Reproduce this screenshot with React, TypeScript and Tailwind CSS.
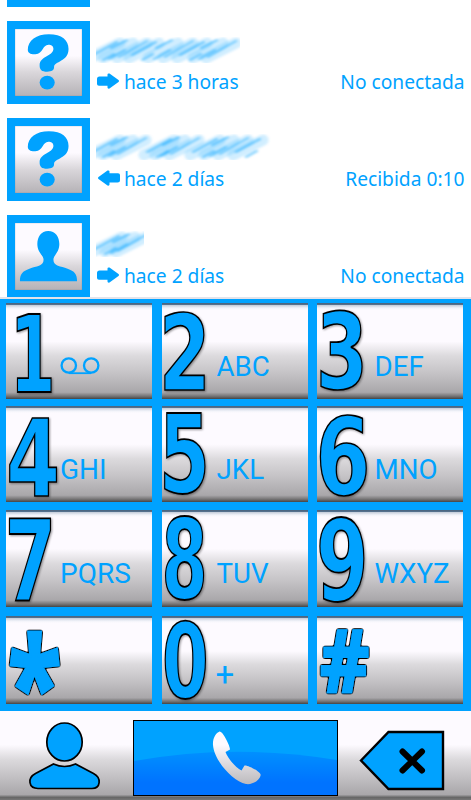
import { ReactNode } from 'react'

type Box = [number, number, number, number]

// left, right, ascent and descent of each glyph, in thousandths of an em
const ink: Record<string, Box> = {
  '1': [117, 633, 729, 0],
  '2': [73, 612, 742, 0],
  '3': [66, 628, 742, -14],
  '4': [36, 657, 729, 0],
  '5': [74, 640, 729, -14],
  '6': [50, 651, 742, -14],
  '7': [67, 630, 729, 0],
  '8': [46, 649, 742, -14],
  '9': [45, 646, 742, -14],
  '0': [46, 650, 742, -14],
  '*': [29, 515, 766, 287],
  '#': [22, 624, 714, 0],
}

type KeyProps = {
  digit: string
  label?: ReactNode
  labelClass?: string
  // where the digit stands inside the key: x0, y0, x1, y1
  box: Box
}

const first = 'mt-[48px] text-[28px]'
const second = 'mt-[48px] ml-px text-[27.7px]'
const third = 'mt-[48px] ml-[3.5px] text-[27.7px]'

const rows: { height: string; keys: KeyProps[] }[] = [
  {
    height: 'h-[96px] mb-[7px]',
    keys: [
      {
        digit: '1',
        box: [11.5, 10, 45.5, 88.5],
        label: <Voicemail />,
        labelClass: first,
      },
      { digit: '2', box: [2.5, 9, 42.5, 86.5], label: 'ABC', labelClass: second },
      { digit: '3', box: [4, 8, 46, 87], label: 'DEF', labelClass: third },
    ],
  },
  {
    height: 'h-[96px] mb-[8px]',
    keys: [
      { digit: '4', box: [3, 11, 51, 89.5], label: 'GHI', labelClass: first },
      { digit: '5', box: [2.5, 7.5, 44, 88], label: 'JKL', labelClass: second },
      { digit: '6', box: [2.5, 8.5, 50, 89], label: 'MNO', labelClass: third },
    ],
  },
  {
    height: 'h-[97px] mb-[9px]',
    keys: [
      { digit: '7', box: [3.5, 7.5, 45.5, 90], label: 'PQRS', labelClass: first },
      { digit: '8', box: [2.5, 6, 42.5, 89.5], label: 'TUV', labelClass: second },
      { digit: '9', box: [2.5, 7.5, 48, 92], label: 'WXYZ', labelClass: third },
    ],
  },
  {
    height: 'h-[88px]',
    keys: [
      { digit: '*', box: [4.5, 15, 52.5, 78] },
      {
        digit: '0',
        box: [3, 5.5, 43.5, 83],
        label: '+',
        labelClass: 'mt-[43px] text-[33px]',
      },
      { digit: '#', box: [5, 14.5, 50.5, 75.5] },
    ],
  },
]

function Voicemail() {
  return (
    <svg width="40" height="18" viewBox="0 0 40 18" className="mt-[6px]">
      <g fill="none" stroke="#00a2ff" strokeWidth="2.3">
        <circle cx="8.8" cy="8.5" r="7.2" />
        <circle cx="31.2" cy="8.5" r="7.2" />
        <path d="M8.8 16.2H31.2" strokeWidth="1.8" />
      </g>
    </svg>
  )
}

const Digit = ({ digit, box }: KeyProps) => {
  const [x0, y0, x1, y1] = box
  const [l, r, top, bottom] = ink[digit]
  const sx = (x1 - x0) / (r - l)
  const sy = (y1 - y0) / (top - bottom)
  const symbol = digit === '*' || digit === '#'

  return (
    <svg
      width="54"
      height="88"
      className={
        symbol
          ? 'shrink-0 overflow-visible [filter:url(#outline)]'
          : 'shrink-0 overflow-visible drop-shadow-[1.5px_1px_1px_rgba(0,0,0,0.4)]'
      }
    >
      {symbol && (
        <filter id="outline" x="-10%" y="-10%" width="120%" height="120%">
          <feGaussianBlur in="SourceAlpha" stdDeviation="0.9" />
          <feComponentTransfer result="edge">
            <feFuncA type="linear" slope="4" intercept="-0.3" />
          </feComponentTransfer>
          <feFlood floodColor="#000" />
          <feComposite in2="edge" operator="in" />
          <feMerge>
            <feMergeNode />
            <feMergeNode in="SourceGraphic" />
          </feMerge>
        </filter>
      )}
      <text
        transform={`matrix(${sx * 10} 0 0 ${sy * 10} ${x0 - l * sx} ${y0 + top * sy})`}
        fontSize="100"
        fontWeight="bold"
        fontFamily={
          symbol ? '"Open Sans", sans-serif' : '"DejaVu Sans", sans-serif'
        }
        fill="#00a2ff"
        stroke={symbol ? '#00a2ff' : '#000'}
        strokeWidth={symbol ? 2.4 : 1.5}
        vectorEffect="non-scaling-stroke"
      >
        {digit}
      </text>
    </svg>
  )
}

const Key = (props: KeyProps) => (
  <div className="flex h-full w-[146px] bg-[linear-gradient(to_bottom,#46617d_0,#55708c_1.5px,#c9d1de_2.5px,#f2f3fa_5px,#fdfaff_7px,#fdfaff_40%,#dcdadd_55%,#c5c3c6_73%,#a9a7aa_93%,#767576_97%,#454545_100%)]">
    <Digit {...props} />
    <div
      className={`h-8 font-['Roboto'] leading-8 text-[#00a2ff] ${props.labelClass}`}
    >
      {props.label}
    </div>
  </div>
)

const Unknown = () => (
  <svg viewBox="45 87 204 202" className="h-full w-full" fill="#00a2ff">
    <path d="M84 149C84 121 110 102 148 102C188 102 208 120 208 147C208 186 164 184 164 202C164 212 157 216 143 216C126 216 120 210 120 197C120 168 160 170 162 147C162 138 155 134 147 134C128 134 132 161 107 163C92 164 84 158 84 149Z" />
    <ellipse cx="143" cy="249" rx="23" ry="21" />
  </svg>
)

const Person = () => (
  <svg viewBox="45 55 204 202" className="h-full w-full" fill="#00a2ff">
    <path d="M146 78C168 78 180 96 180 118C180 144 162 152 162 166C162 186 184 185 205 193C226 201 234 208 234 231H60C60 208 68 201 89 193C110 185 132 186 132 166C132 152 113 144 113 118C113 96 125 78 146 78Z" />
  </svg>
)

type SmudgeProps = { id: string; width: number; dark: number[] }

const Smudge = ({ id, width, dark }: SmudgeProps) => (
  <svg width={width} height="26" className="mt-4 -ml-px overflow-hidden">
    <defs>
      <filter id={id} x="-10%" y="-30%" width="120%" height="160%">
        <feGaussianBlur stdDeviation="1.5 0.9" />
      </filter>
    </defs>
    <g filter={`url(#${id})`} stroke="#00a2ff" strokeLinecap="round">
      {dark.map((x, i) => (
        <g key={x}>
          <path d={`M${x - 10} 21L${x + 20} 6`} strokeWidth="11" opacity="0.18" />
          <path
            d={
              i % 3 === 1
                ? `M${x - 2} 11L${x + 14} 3M${x - 4} 22L${x + 12} 13`
                : i % 3 === 2
                  ? `M${x - 8} 20L${x + 6} 12M${x + 4} 13L${x + 20} 4`
                  : `M${x - 7} 18L${x + 17} 5M${x + 3} 23L${x + 14} 17`
            }
            strokeWidth="2"
            opacity="0.5"
          />
        </g>
      ))}
    </g>
  </svg>
)

const Arrow = ({ incoming }: { incoming?: boolean }) => (
  <svg
    width="22"
    height="16"
    viewBox="0 0 22 16"
    className={
      incoming
        ? '-mt-[3px] ml-px shrink-0 rotate-180'
        : '-mt-[3px] shrink-0'
    }
    fill="#00a2ff"
  >
    <path d="M2.500 3.500H10.500V1.500Q10.500 0 12.500 0.500L21.500 7Q22.500 8 21.500 9L12.500 15.500Q10.500 16 10.500 14.500V12.800H2Q0 12.800 0 11V6Q0 3.500 2.500 3.500Z" />
  </svg>
)

const calls = [
  {
    id: 'call-a',
    icon: <Unknown />,
    when: 'hace 3 horas',
    status: 'No conectada',
    width: 144,
    dark: [4, 17, 31, 43, 62, 77, 91, 107, 120],
  },
  {
    id: 'call-b',
    icon: <Unknown />,
    when: 'hace 2 días',
    status: 'Recibida 0:10',
    incoming: true,
    width: 175,
    dark: [4, 17, 30, 58, 69, 83, 104, 118, 132, 147],
  },
  {
    id: 'call-c',
    icon: <Person />,
    when: 'hace 2 días',
    status: 'No conectada',
    width: 48,
    dark: [6, 19, 30],
  },
]

const CallLog = () => (
  <div className="flex h-[297px] flex-col gap-[14px] overflow-hidden pr-[6.5px] pl-[7px]">
    <div className="h-[7px] w-[83px] shrink-0 bg-[#00a2ff]" />
    {calls.map((call) => (
      <div key={call.id} className="flex h-[83px] shrink-0">
        <div className="h-full w-[83px] shrink-0 border-8 border-[#00a2ff] bg-[linear-gradient(to_bottom,#fdfaff_40%,#d9d6da_65%,#b5b2b6_100%)] shadow-[inset_0_0_1px_#567]">
          {call.icon}
        </div>
        <div className="ml-[7px] flex flex-1 flex-col">
          <Smudge id={call.id} width={call.width} dark={call.dark} />
          <div className="mt-[5px] flex h-7 items-center font-['Noto_Sans'] text-[19.2px] leading-7 text-[#00a2ff]">
            <Arrow incoming={call.incoming} />
            <span className={call.incoming ? 'ml-1' : 'ml-[5px]'}>
              {call.when}
            </span>
            <span className="ml-auto">{call.status}</span>
          </div>
        </div>
      </div>
    ))}
  </div>
)

const Keypad = () => (
  <div className="h-[412px] bg-[#00a2ff] pt-[4px] pr-[8px] pl-[6px]">
    {rows.map((row) => (
      <div key={row.height} className={`flex justify-between ${row.height}`}>
        {row.keys.map((key) => (
          <Key key={key.digit} {...key} />
        ))}
      </div>
    ))}
  </div>
)

const Actions = () => (
  <div className="flex h-[89px] bg-[linear-gradient(to_bottom,#fdfaff_0,#fdfaff_38%,#dcdadd_54%,#c5c3c6_72%,#a9a7aa_94%,#666_97%,#777_100%)]">
    <svg width="133" height="89" viewBox="0 711 133 89">
      <g fill="#00a2ff" stroke="#000" strokeWidth="1.7">
        <ellipse cx="64.5" cy="742" rx="17.7" ry="19" />
        <path d="M53.500 764Q64.500 769 75.500 764L93.500 773.500C102 778 100.500 788.500 92 788.500H38C28.500 788.500 27 778 35.500 773.500Z" />
      </g>
    </svg>
    <button className="mt-[9px] h-[76px] w-[205px] border-[1.5px] border-black bg-[#00a2ff]">
      <svg width="203" height="74" viewBox="134 721 203 74">
        <defs>
          <linearGradient id="gloss" x1="0" y1="0" x2="0" y2="1">
            <stop offset="0" stopColor="#0090ff" />
            <stop offset="0.7" stopColor="#0073ff" />
          </linearGradient>
          <linearGradient id="handset" x1="0" y1="0" x2="0" y2="1">
            <stop offset="0.25" stopColor="#fdfaff" />
            <stop offset="1" stopColor="#bcbabd" />
          </linearGradient>
        </defs>
        <path d="M134 761Q235 743 337 760V796H134Z" fill="url(#gloss)" />
        <path
          d="M219.500 731.500C216 733 212.500 738 213 745C214 760 232 781 246 784C253 785 260 780 260.700 775C260.500 771.500 247 764.500 244.500 765.500L241.500 770.500C235 767 227.500 758 225.500 752L230 749.500C230.500 747 223 731 219.500 731.500Z"
          fill="url(#handset)"
        />
      </svg>
    </button>
    <svg width="133" height="89" viewBox="338 711 133 89">
      <path
        d="M361 760.500L388.500 732H443V789H388.500Z"
        fill="#00a2ff"
        stroke="#000"
        strokeWidth="2.4"
      />
      <path
        d="M402.500 751.500L422 770.500M422 751.500L402.500 770.500"
        stroke="#000"
        strokeWidth="6"
        strokeLinecap="round"
      />
    </svg>
  </div>
)

const App = () => (
  <div className="h-[800px] w-[471px] overflow-hidden bg-white">
    <CallLog />
    <div className="h-[2px] bg-[#e3e3ea]" />
    <Keypad />
    <Actions />
  </div>
)

export default App
